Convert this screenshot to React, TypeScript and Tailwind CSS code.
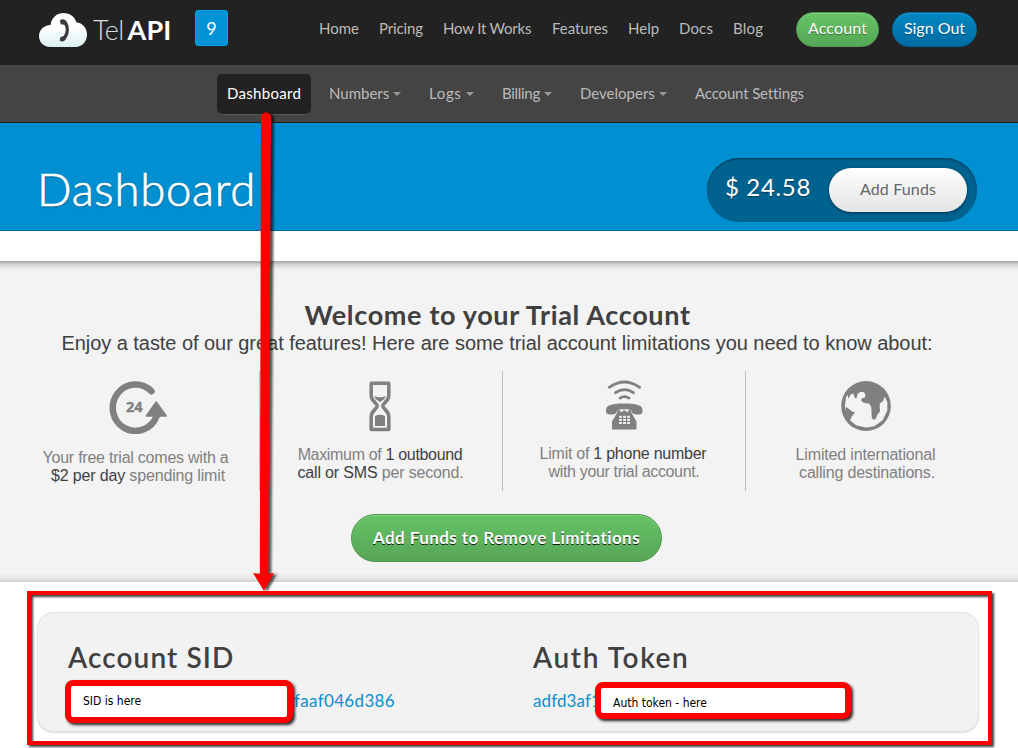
import React from "react";

const topLinks = [
  { label: "Home", cls: "w-[40px]" },
  { label: "Pricing", cls: "w-[44px] tracking-[-0.14px]" },
  { label: "How It Works", cls: "w-[89px] tracking-[-0.2px]" },
  { label: "Features", cls: "w-[56px] tracking-[-0.06px]" },
  { label: "Help", cls: "w-[31px]" },
  { label: "Docs", cls: "w-[34px] tracking-[0.15px]" },
  { label: "Blog", cls: "w-[30px] tracking-[0.2px]" },
];

const subLinks = [
  { label: "Dashboard", cls: "w-[74px] tracking-[0.3px]", active: true, menu: false },
  { label: "Numbers", cls: "w-[60px]", active: false, menu: true },
  { label: "Logs", cls: "w-[33px] tracking-[0.65px]", active: false, menu: true },
  { label: "Billing", cls: "w-[38px] tracking-[-0.3px]", active: false, menu: true },
  { label: "Developers", cls: "w-[75px]", active: false, menu: true },
  { label: "Account Settings", cls: "w-[109px] tracking-[-0.15px]", active: false, menu: false },
];

const keypadRows = [416.3, 419.4, 422.5];
const keypadColumns = [619.1, 623.1, 627.1];

function Logo() {
  return (
    <div className="flex items-center">
      <svg className="h-[36px] w-[50px]" viewBox="38 12 50 36">
        <defs>
          <linearGradient id="cloud" x1="0" y1="0" x2="0" y2="1">
            <stop offset="0.4" stopColor="#ffffff" />
            <stop offset="1" stopColor="#daf1f3" />
          </linearGradient>
        </defs>
        <path
          d="M50 47C43.500 47 39 42 39 36.300C39 30 44 25 50.500 25C51.500 17.500 57 13 63.500 13C70 13 75 17 76.500 22.500C82.500 22.500 87 28.500 87 34.500C87 41.500 82 47 75.500 47Z"
          fill="url(#cloud)"
        />
        <path
          d="M60 20.300C61.500 18.700 64.500 19 66 20.800C70 26 70 34 65.500 39.500C64 41.800 61 42.300 59.800 40.500L60.300 37.300L63.800 36C66.300 32 66.300 28 64.300 24.800L60.600 24.300Z"
          fill="#3b3b3b"
        />
      </svg>
      <div className="ml-[5px] flex text-[27px] leading-[36px] text-white">
        <span className="w-[34.500px] font-light tracking-[-0.500px] text-[#d8dede]">Tel</span>
        <span className="font-bold tracking-[0.2px]">API</span>
      </div>
    </div>
  );
}

function ClockIcon() {
  return (
    <svg className="h-[54px] w-[60px]" viewBox="108 380.500 60 54">
      <path d="M151.500 391.800A22.700 23.200 0 1 0 156.500 417" fill="none" stroke="#808080" strokeWidth="6.500" strokeLinecap="round" />
      <path d="M156.200 402.500L166.300 416.500H146.300Z" fill="#808080" stroke="#808080" strokeWidth="1.500" strokeLinejoin="round" />
      <text x="134.300" y="412.800" textAnchor="middle" className="fill-[#808080] stroke-[#808080] stroke-[0.4px] font-['Open_Sans'] text-[14.500px] font-bold">24</text>
    </svg>
  );
}

function HourglassIcon() {
  return (
    <svg className="h-[51px] w-[24px]" viewBox="368.500 380.500 24 51">
      <path
        d="M371.700 382.800H389.300V395C389.300 401 383.300 402.500 383.300 405.500C383.300 408.500 389.300 410 389.300 416V429H371.700V416C371.700 410 377.700 408.500 377.700 405.500C377.700 402.500 371.700 401 371.700 395Z"
        fill="none"
        stroke="#808080"
        strokeWidth="3.500"
        strokeLinejoin="round"
      />
      <path d="M375 395.500C378 397.200 383 397.200 386 395.500C386 398.500 383 399.500 380.500 401.800C378 399.500 375 398.500 375 395.500Z" fill="#808080" />
      <path d="M375.500 416C377 413.500 384 413.500 385.500 416V425.500H375.500Z" fill="#808080" />
    </svg>
  );
}

function PhoneIcon() {
  return (
    <svg className="ml-[2px] h-[50px] w-[38px]" viewBox="605 380.500 38 50">
      <g fill="none" stroke="#808080" strokeWidth="2.800" strokeLinecap="round">
        <path d="M609.300 387.800Q624.500 377.200 639.600 387.800" />
        <path d="M615.500 393.200Q624.500 387 633.500 393.200" />
        <path d="M620 398.600Q624.500 395.800 629 398.600" />
      </g>
      <path
        d="M606 411C606 406 610 404 624.300 404C638.500 404 642.500 406 642.500 411C642.500 414 641.500 415 638 415C633 415 631.500 413.500 631.500 410.500C631 409.500 617.500 409.500 617 410.500C617 413.500 615.500 415 611 415C607 415 606 414 606 411Z"
        fill="#808080"
      />
      <path d="M617.300 410H620V412.300H622.800V411H625.800V412.300H628.600V410H631.300V413L636.500 422V430H612V422L617.300 413Z" fill="#808080" />
      <g fill="#f3f3f3">
        {keypadRows.map((y) => keypadColumns.map((x) => <rect key={`${x}-${y}`} x={x} y={y} width="2.800" height="2" />))}
      </g>
    </svg>
  );
}

function GlobeIcon() {
  return (
    <svg className="ml-[1px] h-[50px] w-[50px]" viewBox="425 272.500 150 150">
      <ellipse cx="500" cy="347.500" rx="74.500" ry="75" fill="#808080" />
      <path
        d="M437 345L440 322L444 314L448 326L453 314L462 310L466 322L471 326L475 311L484 305L494 306L499 315L496 322L487 325L485 331L493 338L510 341L516 352L517 380L520 388L528 388L534 374L542 364L541 341L552 332L556 318L564 336L564 360L550 390L525 408L500 412L470 405L452 390L457 380L467 366L458 364L450 357L440 350L437 362Z"
        fill="#f3f3f3"
        strokeLinejoin="round"
      />
    </svg>
  );
}

export default function App() {
  return (
    <div className="relative h-[748px] w-[1018px] overflow-hidden bg-white font-['Lato',sans-serif] whitespace-nowrap text-[#404040]">
      <header className="flex h-[65px] items-start bg-[#222222] pl-[38px]">
        <div className="w-[157px] pt-[12px]">
          <Logo />
        </div>
        <div className="mt-[10px] flex h-[36px] w-[33px] items-center justify-center rounded-[3px] border border-[#0aa2e8] bg-[#0093d6] text-[18px] text-white">
          9
        </div>
        <nav className="ml-[91px] flex gap-[20px] pt-[18px] text-[15px] leading-[20px] text-[#bbbbbb]">
          {topLinks.map((l) => (
            <a key={l.label} className={l.cls}>{l.label}</a>
          ))}
        </nav>
        <div className="mt-[12px] ml-[33px] flex gap-[13px] text-[16px] leading-[30px] text-white [text-shadow:0_1px_1px_rgba(0,0,0,0.4)]">
          <a className="h-[35px] w-[83px] rounded-full border border-[#4f9b4f] bg-linear-to-b from-[#66c466] to-[#56a756] text-center tracking-[0.12px] shadow-[inset_0_1px_0_rgba(255,255,255,0.2)]">Account</a>
          <a className="h-[35px] w-[85px] rounded-full border border-[#00679c] bg-linear-to-b from-[#0088c2] to-[#006ba3] text-center shadow-[inset_0_1px_0_rgba(255,255,255,0.15)]">Sign Out</a>
        </div>
      </header>

      <nav className="flex h-[58px] items-start gap-[8px] border-b border-[#222222] bg-[#444444] pt-[9px] pl-[217px] text-[15px] text-[#bbbbbb]">
        {subLinks.map((l) => (
          <a
            key={l.label}
            className={
              l.active
                ? "flex h-[40px] items-center rounded-[5px] bg-[#222222] px-[10px] pb-[2px] text-white shadow-[0_1px_0_rgba(255,255,255,0.1)]"
                : "flex h-[40px] items-center px-[10px] pb-[2px]"
            }
          >
            <span className={l.cls}>{l.label}</span>
            {l.menu && <span className="mt-[2px] ml-[4px] border-x-4 border-t-4 border-x-transparent border-t-[#999999]" />}
          </a>
        ))}
      </nav>

      <section className="flex h-[108px] items-start justify-between border-b border-[#006a9e] bg-[#008fd0] pr-[41px] pl-[37px]">
        <h1 className="pt-[38px] text-[45.500px] leading-[56px] font-light tracking-[0.7px] text-white [-webkit-text-stroke:0.7px_white] [text-shadow:0_1px_2px_rgba(0,0,0,0.4)]">Dashboard</h1>
        <div className="mt-[35px] flex h-[64px] w-[270px] items-start justify-between rounded-full bg-[#00628f] pt-[10px] pr-[10px] pl-[18px] shadow-[inset_0_1px_2px_rgba(0,0,0,0.45)]">
          <span className="pt-[3px] text-[24px] leading-[32px] tracking-[0.65px] text-white [text-shadow:0_1px_1px_rgba(0,0,0,0.4)]">$ 24.58</span>
          <a className="flex h-[44px] w-[138px] items-center justify-center rounded-full bg-linear-to-b from-white to-[#e4e4e4] pb-[2px] text-[16px] tracking-[0.14px] text-[#666666] shadow-[0_1px_3px_rgba(0,0,0,0.5)]">Add Funds</a>
        </div>
      </section>

      <div className="h-[30px]" />

      <section className="flex h-[321px] flex-col bg-[#f3f3f3]">
        <div className="h-[9px] bg-linear-to-b from-[#a6a6a6] via-[#d9d9d9] via-45% to-[#f3f3f3]" />
        <div className="h-[303px] px-[17px] pt-[30px]">
          <h2 className="-ml-[23px] text-center text-[27px] leading-[30px] font-bold tracking-[0.66px]">Welcome to your Trial Account</h2>
          <p className="mt-[1px] -ml-[24px] text-center font-['Liberation_Sans',sans-serif] text-[20px] leading-[24px] tracking-[-0.05px]">
            Enjoy a taste of our great features! Here are some trial account limitations you need to know about:
          </p>
          <div className="mt-[16px] grid h-[120px] grid-cols-[243px_243px_243px_243px] text-center font-['Liberation_Sans',sans-serif] text-[16px] leading-[18px] text-[#808080]">
            <div className="flex flex-col items-center border-r border-[#bfbfbf] pt-[9px]">
              <ClockIcon />
              <p className="mt-[15px] -ml-[5px] tracking-[-0.23px]">Your free trial comes with a</p>
              <p className="tracking-[-0.16px]"><span className="text-[#404040]">$2 per day</span> spending limit</p>
            </div>
            <div className="flex flex-col items-center border-r border-[#bfbfbf] pt-[10px] pr-[2px]">
              <HourglassIcon />
              <p className="mt-[14px] tracking-[-0.33px]">Maximum of <span className="text-[#404040]">1 outbound</span></p>
              <p className="ml-[1px] tracking-[-0.16px]"><span className="text-[#404040]">call or SMS</span> per second.</p>
            </div>
            <div className="flex flex-col items-center border-r border-[#bfbfbf] pt-[9px] pr-[2px]">
              <PhoneIcon />
              <p className="mt-[15px] tracking-[-0.25px]">Limit of <span className="text-[#404040]">1 phone number</span></p>
              <p className="ml-[2px] tracking-[-0.35px]">with your trial account.</p>
            </div>
            <div className="flex flex-col items-center pt-[10px] pr-[4px]">
              <GlobeIcon />
              <p className="mt-[15px] tracking-[-0.16px]">Limited international</p>
              <p className="ml-[3px] tracking-[-0.18px]">calling destinations.</p>
            </div>
          </div>
          <a className="mt-[23px] ml-[334px] flex h-[48px] w-[311px] items-center justify-center rounded-full border border-[#4f974f] bg-linear-to-b from-[#65c465] to-[#57a557] text-[17px] font-bold tracking-[0.43px] text-white shadow-[inset_0_1px_0_rgba(255,255,255,0.2)] [text-shadow:0_1px_0_rgba(0,0,0,0.85)]">
            Add Funds to Remove Limitations
          </a>
        </div>
        <div className="h-[7px] bg-linear-to-b from-[#f3f3f3] to-[#e0e0e0]" />
        <div className="h-[2px] bg-[#d5d5d5]" />
      </section>

      <section className="mt-[30px] ml-[37px] flex h-[120px] w-[942px] rounded-[16px] border border-[#e3e3e3] bg-[#f2f2f2] pt-[26px] pl-[30px] shadow-[0_1px_1px_rgba(0,0,0,0.12)]">
        <div className="w-[465px]">
          <h3 className="text-[28px] leading-[36px] font-semibold tracking-[1.1px]">Account SID</h3>
          <p className="mt-[15px] pl-[226px] text-[17px] leading-[22px] tracking-[0.33px] text-[#0a8fcf]">faaf046d386</p>
        </div>
        <div>
          <h3 className="text-[28px] leading-[36px] font-semibold tracking-[1.6px]">Auth Token</h3>
          <p className="mt-[15px] text-[17px] leading-[22px] tracking-[0.1px] text-[#0a8fcf]">adfd3af1</p>
        </div>
      </section>

      <svg className="absolute top-[105px] left-[245px] h-[500px] w-[40px] drop-shadow-[3px_1px_1px_rgba(0,0,0,0.65)]" viewBox="245 105 40 500">
        <path d="M261 117.500A5 5 0 0 1 271 117.500L268.300 574L274 573L264 591L253 573L259.800 574Z" fill="#ff0000" />
      </svg>
      <div className="absolute top-[591px] left-[27px] h-[154px] w-[965px] border-[4px] border-[#ff0000] drop-shadow-[2px_2px_1px_rgba(0,0,0,0.75)]" />
      <div className="absolute top-[680px] left-[65px] flex h-[43px] w-[228px] items-center rounded-[8px] border-[6px] border-[#ff0000] bg-white pb-[2px] pl-[12px] font-['DejaVu_Sans_Condensed','DejaVu_Sans',sans-serif] text-[12px] text-black shadow-[2px_2px_3px_rgba(0,0,0,0.85)]">SID is here</div>
      <div className="absolute top-[682px] left-[595px] flex h-[37px] w-[256px] items-center rounded-[8px] border-[6px] border-[#ff0000] bg-white pl-[12px] font-['DejaVu_Sans_Condensed','DejaVu_Sans',sans-serif] text-[12px] text-black shadow-[2px_2px_3px_rgba(0,0,0,0.85)]"><span className="mt-[4px]">Auth token - here</span></div>
    </div>
  );
}
